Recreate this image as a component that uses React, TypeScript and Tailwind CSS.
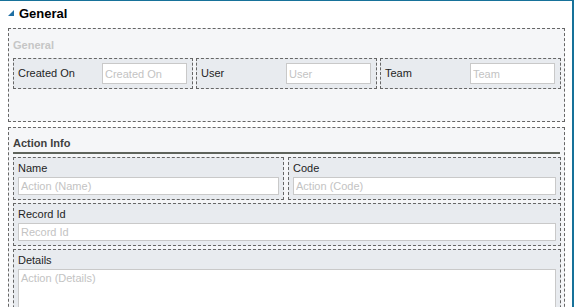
import React from 'react';

const font = { fontFamily: '"Liberation Sans", Arial, sans-serif' };

type InlineFieldProps = { label: string; placeholder: string; width: string };

// label on the left, small input on the right
const InlineField: React.FC<InlineFieldProps> = ({ label, placeholder, width }) => (
  <div className={`${width} shrink-0 h-[31px] flex items-center border border-dashed border-[#666666] bg-[#e8ebef] pl-[4px] pr-[5px]`}>
    <span className="flex-1 text-[11px] text-[#1e1e1e] leading-none">{label}</span>
    <input
      className="w-[85px] h-[21px] bg-white border border-[#c9c9c9] px-[2px] text-[11px] placeholder:text-[#c3c3c3] outline-none"
      placeholder={placeholder}
      style={font}
    />
  </div>
);

type StackedFieldProps = { label: string; placeholder: string; className?: string; tall?: boolean };

// label above, input stretched below
const StackedField: React.FC<StackedFieldProps> = ({ label, placeholder, className = '', tall }) => (
  <div className={`${className} border border-dashed border-[#666666] bg-[#e8ebef] pt-[2px] px-[4px] pb-[4px]`}>
    <div className="text-[11px] leading-[17px] text-[#1e1e1e]">{label}</div>
    {tall ? (
      <textarea
        className="block w-full h-[60px] bg-white border border-[#c9c9c9] px-[2px] text-[11px] placeholder:text-[#c3c3c3] outline-none resize-none"
        placeholder={placeholder}
        style={font}
      />
    ) : (
      <input
        className="block w-full h-[18px] bg-white border border-[#c9c9c9] px-[2px] text-[11px] placeholder:text-[#c3c3c3] outline-none"
        placeholder={placeholder}
        style={font}
      />
    )}
  </div>
);

const App: React.FC = () => {
  return (
    <div className="w-[574px] h-[307px] overflow-hidden bg-white border-t border-r-2 border-[#17729a]" style={font}>
      {/* Tab header */}
      <div className="flex items-center h-[27px] pl-[8px] pb-[1px]">
        <svg width="6" height="6" viewBox="0 0 6 6" className="mb-[3px]">
          <polygon points="6,0 6,6 0,6" fill="#1f6fa3" />
        </svg>
        <span className="ml-[5px] text-[13px] font-bold text-black">General</span>
      </div>

      {/* General section */}
      <div className="ml-[8px] w-[557px] h-[94px] border border-dashed border-[#666666] bg-[#f5f6f8] pt-[8px] pl-[4px] pr-[3px]">
        <div className="text-[11px] font-bold leading-[16px] text-[#c6c6c6] mb-[5px]">General</div>
        <div className="flex gap-[3px]">
          <InlineField label="Created On" placeholder="Created On" width="w-[180px]" />
          <InlineField label="User" placeholder="User" width="w-[181px]" />
          <InlineField label="Team" placeholder="Team" width="w-[181px]" />
        </div>
      </div>

      {/* Action Info section */}
      <div className="ml-[8px] mt-[5px] w-[557px] h-[200px] border border-dashed border-[#666666] bg-[#f5f6f8] pt-[7px] pl-[4px] pr-[3px]">
        <div className="text-[11px] font-bold leading-[17px] text-[#3f3f3f]">Action Info</div>
        <div className="h-[2px] bg-[#5f645c] mr-[1px]" />
        <div className="flex flex-col gap-[3px] mt-[3px]">
          <div className="flex gap-[4px]">
            <StackedField label="Name" placeholder="Action (Name)" className="w-[271px]" />
            <StackedField label="Code" placeholder="Action (Code)" className="flex-1" />
          </div>
          <StackedField label="Record Id" placeholder="Record Id" />
          <StackedField label="Details" placeholder="Action (Details)" tall />
        </div>
      </div>
    </div>
  );
};

export default App;
